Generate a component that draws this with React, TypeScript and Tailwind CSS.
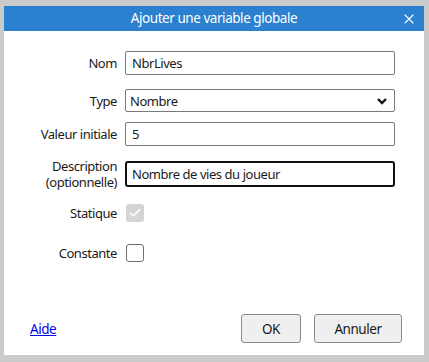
import { Check, X } from "lucide-react";

export default function App() {
    return (
        <div
            className="w-[429px] h-[362px] bg-[#cbcbcb] pt-[6px] pl-[4px] text-[13px] leading-[18px] tracking-[-0.45px] text-[#1a1a1a]"
            style={{ fontFamily: '"Noto Sans", "Open Sans", sans-serif' }}
        >
            <div className="w-[420px] h-[349px] bg-white flex flex-col">
                {/* Title bar */}
                <div className="h-[25px] bg-[#2b80cf] text-white flex items-center relative">
                    <span className="flex-1 text-center text-[13.5px] leading-none">Ajouter une variable globale</span>
                    <X size={16} strokeWidth={1.6} className="absolute right-[7px] top-[5px]" />
                </div>

                {/* Form */}
                <div className="flex flex-col pt-[20px]">
                    <div className="h-[24px] flex items-center gap-[8px]">
                        <label className="w-[113px] text-right">Nom</label>
                        <div className="w-[270px] h-[24px] border border-[#7a7a7a] rounded-[2px] px-[6px] flex items-center">NbrLives</div>
                    </div>

                    <div className="h-[23px] flex items-center gap-[8px] mt-[14px]">
                        <label className="w-[113px] text-right">Type</label>
                        <div className="w-[270px] h-[23px] border border-[#7a7a7a] rounded-[2px] pl-[4px] pr-[6px] flex items-center justify-between">
                            <span>Nombre</span>
                            <svg width="12" height="8" viewBox="0 0 12 8">
                                <path d="M2 2 L6 6 L10 2" fill="none" stroke="#111" strokeWidth="2.4" />
                            </svg>
                        </div>
                    </div>

                    <div className="h-[24px] flex items-center gap-[8px] mt-[10px]">
                        <label className="w-[113px] text-right whitespace-nowrap">Valeur initiale</label>
                        <div className="w-[270px] h-[24px] border border-[#7a7a7a] rounded-[2px] px-[6px] flex items-center">5</div>
                    </div>

                    <div className="h-[26px] flex items-center gap-[8px] mt-[15px]">
                        <label className="w-[113px] text-right leading-[16px]">
                            Description
                            <br />
                            (optionnelle)
                        </label>
                        <div className="w-[270px] h-[26px] border-2 border-[#111] rounded-[3px] px-[5px] flex items-center">Nombre de vies du joueur</div>
                    </div>

                    <div className="h-[18px] flex items-center gap-[9px] mt-[17px]">
                        <label className="w-[113px] text-right">Statique</label>
                        <div className="w-[18px] h-[18px] rounded-[3px] bg-[#d4d4d4] flex items-center justify-center">
                            <Check size={14} strokeWidth={3} className="text-white" />
                        </div>
                    </div>

                    <div className="h-[18px] flex items-center gap-[9px] mt-[22px]">
                        <label className="w-[113px] text-right">Constante</label>
                        <div className="w-[18px] h-[18px] rounded-[3px] border border-[#6e6e6e] bg-white" />
                    </div>
                </div>

                {/* Footer */}
                <div className="mt-auto mb-[12px] flex items-center pl-[26px] pr-[22px] text-[13.5px]">
                    <a href="#" className="text-[#0000ee] underline">Aide</a>
                    <div className="ml-auto flex gap-[13px]">
                        <button className="w-[60px] h-[29px] bg-[#efefef] border border-[#8a8a8a] rounded-[3px]">OK</button>
                        <button className="w-[88px] h-[29px] bg-[#efefef] border border-[#8a8a8a] rounded-[3px]">Annuler</button>
                    </div>
                </div>
            </div>
        </div>
    );
}
